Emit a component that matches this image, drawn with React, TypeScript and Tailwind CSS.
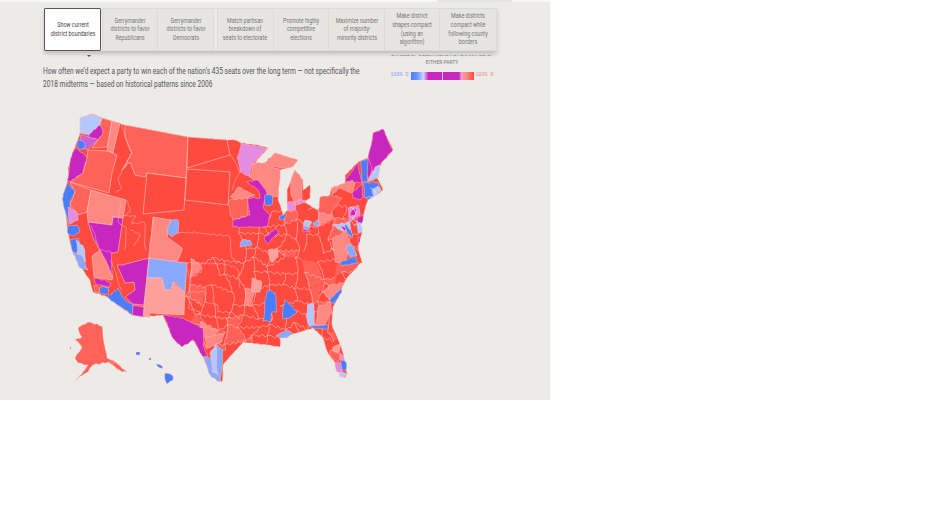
const font = { fontFamily: '"Roboto", "Liberation Sans", sans-serif' }

const RED = '#fe4a3f'
const SOFT = '#fe6259'
const PALE = '#ff8883'
const ROSE = '#ffa09c'
const MAG = '#c926c0'
const PINK = '#e38ce0'
const BLUE = '#4a7dfe'
const MID = '#8aa8fe'
const ICE = '#b4c8ff'

const tabs = [
  'Gerrymander districts to favor Republicans',
  'Gerrymander districts to favor Democrats',
  'Match partisan breakdown of seats to electorate',
  'Promote highly competitive elections',
  'Maximize number of majority-minority districts',
  'Make district shapes compact (using an algorithm)',
  'Make districts compact while following county borders',
]

const outline =
  '80,118 92,114 102,118 125,125 188,137 227,140 235,140 241,143 257,145 268,148 255,163 264,163 275,153 298,160 293,166 280,170 278,200 283,215 288,210 287,190 292,177 295,170 303,180 303,190 310,185 310,198 305,202 317,210 328,200 332,188 345,183 345,175 358,162 368,158 373,133 383,129 393,150 382,162 377,177 383,190 368,200 363,217 359,222 362,233 358,247 362,263 360,263 347,278 333,307 332,325 343,353 347,373 345,378 337,365 328,353 323,338 313,328 300,332 280,338 280,347 267,345 243,342 223,365 222,382 212,377 203,357 193,340 182,347 172,337 163,315 143,317 132,315 107,297 93,292 90,280 83,270 72,250 67,225 63,197 68,180 68,168 75,148 80,133'

// big western states keep their straight edges
const states: [string, string][] = [
  [ICE, '80,118 92,114 102,118 100,125 92,132 90,135 80,133'],
  [SOFT, '102,118 112,121 107,147 92,148 98,140 103,132 100,125'],
  [PALE, '112,121 120,123 113,153 107,151'],
  [SOFT, '87,157 88,150 108,151 117,155 112,173 109,193 70,182 83,173'],
  [SOFT, '125,125 188,137 186,178 147,173 145,177 135,175 130,162 122,170 132,153 125,137'],
  [RED, '147,173 186,178 184,210 143,214'],
  [RED, '188,137 227,140 230,155 187,168'],
  [RED, '187,169 230,172 228,205 185,200'],
  [SOFT, '70,182 91,190 87,212 78,215 70,205 75,192'],
  [PALE, '91,190 126,200 123,218 113,217 112,225 88,222 87,212'],
  [MAG, '88,222 112,225 113,217 123,218 118,252 103,255 93,238'],
  [PALE, '92,256 100,250 113,277 112,280 94,277'],
  [PALE, '153,217 171,220 167,237 182,248 182,250 178,260 148,267 150,250'],
  [MAG, '122,265 149,258 144,305 133,304 125,297 135,290 134,282 125,283 117,265'],
  [MID, '149,258 187,263 185,293 175,282 170,290 163,290 162,278 147,278'],
  [ROSE, '147,278 162,278 165,290 172,290 173,282 185,293 184,315 150,313 149,318 143,315'],
  [MAG, '133,305 144,307 143,317 132,315'],
]

// [fill, points] the rest get a rough edge when drawn
const districts: [string, string][] = [
  // northwest and california
  [MAG, '100,125 103,132 98,140 88,137 92,132'],
  ['#c95fd6', '80,135 90,137 98,140 88,150 80,148'],
  [BLUE, '78,140 84,142 85,148 80,150 77,146'],
  [MAG, '75,148 87,157 83,173 70,182 67,180 70,162'],
  [BLUE, '67,183 75,192 70,202 72,212 68,225 63,202 63,197'],
  [PINK, '68,207 77,213 78,220 70,224'],
  [BLUE, '68,226 77,225 80,232 74,236 68,234'],
  [BLUE, '70,240 78,238 80,250 74,254'],
  [ICE, '76,240 84,248 86,262 78,258'],
  [MID, '72,252 82,256 88,270 80,268'],
  [MAG, '100,250 111,252 113,277'],
  [MAG, '94,278 110,282 110,287 96,284'],
  [BLUE, '100,287 108,287 108,294 100,294'],
  [SOFT, '94,285 99,288 99,293 95,292'],
  [MID, '171,220 178,220 178,233 172,237 167,232'],
  [BLUE, '107,297 118,288 125,300 133,305 132,315'],
  // texas
  [MAG, '163,315 183,318 203,328 203,345 208,357 203,357 193,340 182,347 172,337'],
  [MID, '203,357 213,358 215,343 223,350 220,382 210,375'],
  [ICE, '210,352 216,345 218,375 212,372'],
  [PALE, '205,338 225,332 222,342 212,346 206,348'],
  // alaska and hawaii
  [SOFT, '88,322 102,326 107,358 115,362 127,372 122,372 108,362 93,365 88,372 75,380 83,372 88,365 78,363 75,358 82,347 75,340 82,337 78,328'],
  [SOFT, '70,347 71,347 71,349 70,349'],
  [SOFT, '110,362 113,360 114,364 111,364'],
  [BLUE, '165,373 172,375 173,380 167,384 165,380'],
  [BLUE, '136,352 140,352 140,355 136,355'],
  [BLUE, '149,358 151,358 151,360 149,360'],
  [BLUE, '156,364 162,366 163,368 158,367'],
  // upper midwest
  [PINK, '237,158 241,143 267,148 253,163 250,177 240,172'],
  [PALE, '250,177 253,163 265,163 280,170 278,197 270,197 262,190'],
  [PALE, '265,163 275,153 298,160 292,167 280,168'],
  [PALE, '292,177 295,170 303,180 302,200 305,202 295,205 291,195'],
  [PALE, '230,197 238,187 255,195 248,198 235,200'],
  [SOFT, '229,200 248,198 248,215 233,220 230,215'],
  [MAG, '233,220 250,215 248,198 260,198 258,190 247,182 258,180 267,193 263,207 270,215 267,227 258,227 243,227 233,227'],
  [BLUE, '265,195 272,195 272,205 265,205'],
  [PINK, '288,202 295,202 295,210 288,210'],
  [PINK, '298,200 306,200 306,203 298,203'],
  [BLUE, '279,217 286,213 285,218 280,220'],
  [SOFT, '320,197 330,195 342,198 330,215 318,212'],
  [MAG, '264,238 275,228 279,232 268,244'],
  [ROSE, '268,250 277,248 278,257 272,263'],
  [MID, '242,240 250,240 252,245 240,247'],
  [MID, '313,223 318,220 320,224 314,226'],
  // northeast
  [MAG, '373,133 383,129 393,150 382,162 372,172 368,158'],
  [MAG, '345,180 358,162 362,182 348,183'],
  [BLUE, '360,162 368,158 368,182 362,182'],
  [ICE, '375,167 380,165 378,178 368,182'],
  [MAG, '368,158 372,170 368,180'],
  [PALE, '345,183 352,180 355,183 352,193 340,188 332,195 331,188'],
  [MAG, '352,193 362,183 363,197 360,200 353,198'],
  [BLUE, '363,183 378,182 381,192 368,200 364,197'],
  [ICE, '372,190 378,186 381,191 374,196'],
  [PINK, '348,208 358,205 360,215 350,222'],
  [MAG, '352,210 356,208 355,216 350,216'],
  [MAG, '357,218 363,215 362,223 358,225'],
  [ICE, '357,224 360,222 362,232 358,233'],
  [ICE, '332,225 350,222 352,233 340,230'],
  [BLUE, '345,224 353,235 352,238 346,230'],
  [MAG, '339,226 346,228 345,231'],
  [MAG, '358,238 360,237 358,247'],
  [PALE, '333,238 345,232 352,245 345,262 335,262'],
  [MID, '346,246 352,245 357,256 350,257'],
  [BLUE, '340,262 355,256 358,263 342,266'],
  [ICE, '305,220 312,222 308,228 303,226'],
  [MID, '303,227 310,227 309,229 304,229'],
  [MAG, '302,230 310,230 310,232 303,232'],
  // southeast
  [BLUE, '268,290 275,293 277,312 272,312 271,321 263,321 266,297'],
  [BLUE, '285,300 290,305 297,312 290,318 283,319 283,307'],
  [ICE, '307,305 313,303 315,325 310,327 306,317'],
  [BLUE, '309,326 328,325 328,329 313,328'],
  [BLUE, '328,293 340,287 342,292 335,303 330,302'],
  [PALE, '318,307 330,302 332,313 325,325 315,325'],
  [PALE, '330,285 345,282 340,290 330,300 322,292'],
  [ROSE, '252,278 262,282 260,292 252,292'],
  [ROSE, '333,347 340,343 339,353 333,352'],
  [PINK, '335,363 342,363 342,372 337,372'],
  [PINK, '340,353 345,360 340,360'],
  [BLUE, '341,360 346,362 346,370 342,370'],
  [ICE, '340,372 347,374 343,378 339,376'],
  [SOFT, '330,350 340,355 338,362 332,358'],
  [MID, '287,330 293,334 284,338 276,336'],
]

// longer borders in the west and plains
const lines = [
  '120,123 125,137 132,153 122,170 118,178 122,188 116,193',
  '126,200 130,212 124,216 136,216 132,224 144,222 146,250',
  '153,217 150,250 149,258',
  '178,233 188,232 229,236 232,258 240,262',
  '187,263 228,264 238,270 240,288',
  '187,268 190,292 205,292 205,302 218,305 218,312 232,312 240,320',
  '190,292 188,308 200,312 205,328 225,332',
  '230,155 240,172 232,190',
  '120,200 118,222 127,228 124,250',
  '110,260 122,290',
  '90,225 96,240 100,250',
  '130,230 140,235 134,246',
]

// breaks a line into small steps so borders read like county edges
function rough(points: string, amount: number, closed: boolean) {
  const pts = points.split(' ').map((p) => p.split(',').map(Number))
  if (closed) pts.push(pts[0])
  const out: string[] = []
  let n = 0
  for (let i = 0; i < pts.length - 1; i++) {
    const [x1, y1] = pts[i]
    const [x2, y2] = pts[i + 1]
    const steps = Math.max(1, Math.round(Math.hypot(x2 - x1, y2 - y1) / 3))
    for (let s = 0; s < steps; s++) {
      n++
      const jx = s === 0 ? 0 : Math.sin(n * 12.9898) * amount
      const jy = s === 0 ? 0 : Math.sin(n * 78.233) * amount
      out.push(`${(x1 + ((x2 - x1) * s) / steps + jx).toFixed(1)},${(y1 + ((y2 - y1) * s) / steps + jy).toFixed(1)}`)
    }
  }
  if (!closed) out.push(pts[pts.length - 1].join(','))
  return out.join(' ')
}

function noise(n: number) {
  const v = Math.sin(n * 91.345) * 43758.5453
  return v - Math.floor(v)
}

// the dense eastern districts: a jittered mesh, clipped to the country
const CELL = 13
const COLS = 13
const ROWS = 11
const vx = (c: number, r: number) => 190 + c * CELL + (noise(c * 31 + r * 7) - 0.5) * 11
const vy = (c: number, r: number) => 210 + r * CELL + (noise(c * 17 + r * 43) - 0.5) * 11

const meshCells: string[] = []
const meshEdges: string[] = []
for (let c = 0; c < COLS; c++) {
  for (let r = 0; r < ROWS; r++) {
    const a = `${vx(c, r)},${vy(c, r)}`
    const b = `${vx(c + 1, r)},${vy(c + 1, r)}`
    const d = `${vx(c, r + 1)},${vy(c, r + 1)}`
    const e = `${vx(c + 1, r + 1)},${vy(c + 1, r + 1)}`
    // the plains stay open at the top left
    const open = c < 4 && r < 4
    if (!open && noise(c * 5 + r * 11 + 1) < 0.18) meshCells.push(`${a} ${b} ${e} ${d}`)
    if (!open && noise(c * 13 + r * 3 + 2) > 0.2) meshEdges.push(`${a} ${b}`)
    if (!open && noise(c * 3 + r * 19 + 3) > 0.2) meshEdges.push(`${a} ${d}`)
  }
}

function UsMap() {
  return (
    <svg width="340" height="282" viewBox="60 110 340 282" className="block">
      <defs>
        <clipPath id="country">
          <polygon points={outline} />
        </clipPath>
      </defs>
      <polygon points={rough(outline, 0.4, true)} fill={RED} stroke="#ffb2ac" strokeWidth="0.4" strokeLinejoin="round" />
      <g clipPath="url(#country)">
        {meshCells.map((pts, i) => (
          <polygon key={i} points={rough(pts, 0.8, true)} fill={i % 4 === 0 ? PALE : SOFT} />
        ))}
        {meshEdges.map((pts, i) => (
          <polyline key={i} points={rough(pts, 1.4, false)} fill="none" stroke="#ffc0ba" strokeWidth="0.6" />
        ))}
      </g>
      {states.map(([fill, pts], i) => (
        <polygon key={i} points={pts} fill={fill} stroke="#ffc4bf" strokeWidth="0.6" strokeLinejoin="round" />
      ))}
      {districts.map(([fill, pts], i) => (
        <polygon key={i} points={rough(pts, 0.7, true)} fill={fill} stroke="#ffc4bf" strokeWidth="0.45" strokeLinejoin="round" />
      ))}
      {lines.map((pts, i) => (
        <polyline key={i} points={rough(pts, 0.9, false)} fill="none" stroke="#ffb2ac" strokeWidth="0.55" />
      ))}
      {/* northeast corridor specks */}
      <polyline points={rough('350,207 356,212 352,218 358,222 354,226', 1, false)} fill="none" stroke="#f4e8ff" strokeWidth="0.7" />
      <polyline points={rough('370,188 376,192 372,197 366,198', 1, false)} fill="none" stroke="#f4e8ff" strokeWidth="0.6" />
    </svg>
  )
}

function Tab({ label }: { label: string }) {
  return (
    <div className="w-[55.6px] h-full flex items-center justify-center text-center border-r border-[#dcdbd7] last:border-r-0">
      <span className="w-[54px] shrink-0 scale-x-[0.84] text-[6.4px] leading-[8.6px] text-[#77767a]">{label}</span>
    </div>
  )
}

export default function App() {
  return (
    <div className="w-[951px] h-[530px] bg-white overflow-hidden" style={font}>
      <div className="w-[550px] h-[400px] bg-[#ecebe8] flex flex-col">
        <div className="h-[2px] bg-[#f7f7f6] flex justify-end pr-[38px]">
          <div className="w-[75px] h-full bg-[#e4e4e2]" />
        </div>

        {/* option tabs, they sit over the top of the legend */}
        <div className="h-[53px] flex flex-col relative z-10 bg-[#ecebe8]">
          <div className="ml-[44px] mt-[6px] w-[453px] h-[43px] flex relative shadow-[0_3px_4px_rgba(0,0,0,0.18)]">
            <div className="w-[57px] h-full bg-white border border-[#55555a] rounded-[1px] flex items-center justify-center text-center shrink-0">
              <span className="w-[56px] shrink-0 scale-x-[0.84] text-[6.4px] leading-[8.6px] text-[#444]">Show current district boundaries</span>
            </div>
            <div className="w-[4px]" />
            <div className="flex-1 h-full flex bg-[#e6e5e1] border border-[#dcdbd7]">
              {tabs.slice(0, 2).map((t) => (
                <Tab key={t} label={t} />
              ))}
              <div className="w-[4px] bg-[#ecebe8] border-r border-[#dcdbd7]" />
              {tabs.slice(2).map((t) => (
                <Tab key={t} label={t} />
              ))}
            </div>
            <div className="absolute left-[43px] top-[47px] w-0 h-0 border-l-[2px] border-r-[2px] border-t-[2px] border-l-transparent border-r-transparent border-t-[#55555a]" />
          </div>
        </div>

        {/* intro and legend */}
        <div className="ml-[43px] mt-[10px] w-[450px] flex justify-between items-start">
          <div className="w-[325px]">
            <p className="w-[396px] origin-left scale-x-[0.8] text-[8.3px] leading-[13.4px] text-[#55555a]">
              How often we’d expect a party to win each of the nation’s 435 seats over the long term — not specifically the 2018 midterms — based on historical patterns since 2006
            </p>
          </div>
          <div className="w-[102px] flex flex-col items-center -mt-[14px]">
            <div className="scale-x-[0.85] text-[5.8px] leading-[7px] text-[#77767a] whitespace-nowrap">SHADES OF COLOR INDICATE ADVANTAGE OF</div>
            <div className="mt-[1px] scale-x-[0.85] text-[5.8px] leading-[7px] text-[#77767a] whitespace-nowrap">EITHER PARTY</div>
            <div className="mt-[6px] flex items-center gap-[2px] text-[5px] whitespace-nowrap" style={{ fontFamily: '"Liberation Mono", monospace' }}>
              <span className="text-[#7f9bf5]">100% D</span>
              <div className="relative w-[63px] h-[8px] bg-[linear-gradient(90deg,#4a7dfe_0%,#6d95fe_10%,#cfd9ff_20%,#d96ed8_24%,#c926c0_28%,#c926c0_76%,#ee9cc0_80%,#ff8a84_88%,#fe4a3f_100%)]">
                <div className="absolute left-[31px] top-0 w-px h-full bg-[#efc0ea]" />
              </div>
              <span className="text-[#f08a85]">100% R</span>
            </div>
          </div>
        </div>

        <div className="mt-[18px] ml-[60px]">
          <UsMap />
        </div>
      </div>
    </div>
  )
}
